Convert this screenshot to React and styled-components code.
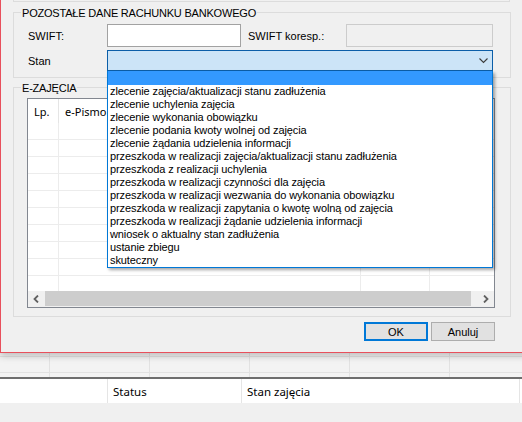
import React from "react";
import styled, { createGlobalStyle } from "styled-components";

const stany = [
  "zlecenie zajęcia/aktualizacji stanu zadłużenia",
  "zlecenie uchylenia zajęcia",
  "zlecenie wykonania obowiązku",
  "zlecenie podania kwoty wolnej od zajęcia",
  "zlecenie żądania udzielenia informacji",
  "przeszkoda w realizacji zajęcia/aktualizacji stanu zadłużenia",
  "przeszkoda z realizacji uchylenia",
  "przeszkoda w realizacji czynności dla zajęcia",
  "przeszkoda w realizacji wezwania do wykonania obowiązku",
  "przeszkoda w realizacji zapytania o kwotę wolną od zajęcia",
  "przeszkoda w realizacji żądanie udzielenia informacji",
  "wniosek o aktualny stan zadłużenia",
  "ustanie zbiegu",
  "skuteczny",
];

const columns = [31, 302, 69, 80];
const backColumns = [50, 100, 100, 100, 100, 100];

const App = () => {
  return (
    <Page>
      <GlobalStyle />
      <Dialog>
        <Content>
          <TopRemnant />
          <GroupBox $top={10} $height={66} $pad={14}>
            <Legend>POZOSTAŁE DANE RACHUNKU BANKOWEGO</Legend>
            <FieldRow $top={11} $height={23}>
              <Label $w={79}>SWIFT:</Label>
              <TextInput $w={134} />
              <Label $w={98} style={{ marginLeft: 7 }}>
                SWIFT koresp.:
              </Label>
              <TextInput $w={147} $disabled />
            </FieldRow>
            <FieldRow $top={3} $height={21}>
              <Label $w={79}>Stan</Label>
              <Combo>
                <svg width="9" height="6" viewBox="0 0 9 6">
                  <polyline
                    points="0.5,0.5 4.5,4.5 8.5,0.5"
                    fill="none"
                    stroke="#3c3c3c"
                    strokeWidth="1.1"
                  />
                </svg>
                <DropList>
                  <ListItem $selected />
                  {stany.map((s) => (
                    <ListItem key={s}>{s}</ListItem>
                  ))}
                </DropList>
              </Combo>
            </FieldRow>
          </GroupBox>

          <GroupBox $top={9} $height={230} $pad={13}>
            <Legend>E-ZAJĘCIA</Legend>
            <Grid>
              <GridHeader>
                {columns.map((w, i) => (
                  <HeaderCell key={i} $w={w}>
                    {i === 0 ? "Lp." : i === 1 ? "e-Pismo" : ""}
                  </HeaderCell>
                ))}
              </GridHeader>
              <GridBody>
                {Array.from({ length: 10 }).map((_, r) => (
                  <GridRow key={r}>
                    {columns.map((w, i) => (
                      <GridCell key={i} $w={w} />
                    ))}
                  </GridRow>
                ))}
              </GridBody>
              <ScrollBar>
                <ScrollArrow>
                  <svg width="7" height="8" viewBox="0 0 7 8">
                    <polyline
                      points="5,0.5 1.5,4 5,7.5"
                      fill="none"
                      stroke="#606060"
                      strokeWidth="1.8"
                    />
                  </svg>
                </ScrollArrow>
                <ScrollTrack>
                  <Thumb />
                </ScrollTrack>
                <ScrollArrow>
                  <svg width="7" height="8" viewBox="0 0 7 8">
                    <polyline
                      points="2,0.5 5.5,4 2,7.5"
                      fill="none"
                      stroke="#606060"
                      strokeWidth="1.8"
                    />
                  </svg>
                </ScrollArrow>
              </ScrollBar>
            </Grid>
          </GroupBox>

          <ButtonRow>
            <Button $default>OK</Button>
            <Button>Anuluj</Button>
          </ButtonRow>
        </Content>
      </Dialog>

      <BackStrip>
        {[3, 15, 4].map((h, r) => (
          <StripRow key={r} $height={h} $last={r === 2}>
            {backColumns.map((w, i) => (
              <StripCell key={i} $w={w} />
            ))}
          </StripRow>
        ))}
      </BackStrip>
      <BackGrid>
        <BackHeader>
          <BackHeaderCell $w={108} />
          <BackHeaderCell $w={134}>Status</BackHeaderCell>
          <BackHeaderCell $w={278}>Stan zajęcia</BackHeaderCell>
        </BackHeader>
      </BackGrid>
    </Page>
  );
};

export default App;

const GlobalStyle = createGlobalStyle`
  html, body {
    margin: 0;
    padding: 0;
    background: #f0f0f0;
  }
  body {
    font-family: "Liberation Sans", Arial, sans-serif;
    font-size: 11px;
    color: #000;
  }
  * {
    box-sizing: border-box;
  }
`;

const Page = styled.div`
  width: 522px;
  height: 422px;
  overflow: hidden;
  background: #f0f0f0;
`;

const Dialog = styled.div`
  position: relative;
  z-index: 1;
  width: 580px;
  height: 353px;
  padding-left: 12px;
  background: #f0f0f0;
  border-left: 1px solid #e8505c;
  border-bottom: 1px solid #e8505c;
  box-shadow: 0 3px 7px rgba(0, 0, 0, 0.22);
`;

const Content = styled.div`
  width: 498px;
  display: flex;
  flex-direction: column;
`;

const TopRemnant = styled.div`
  width: 497px;
  height: 2px;
  border: 1px solid #dcdcdc;
  border-top: none;
`;

const GroupBox = styled.div`
  position: relative;
  margin-top: ${(p) => p.$top}px;
  height: ${(p) => p.$height}px;
  border: 1px solid #dcdcdc;
  padding-left: ${(p) => p.$pad}px;
`;

const Legend = styled.span`
  position: absolute;
  top: -6px;
  left: 7px;
  padding: 0 1px;
  background: #f0f0f0;
  line-height: 13px;
  letter-spacing: -0.2px;
`;

const FieldRow = styled.div`
  display: flex;
  align-items: center;
  margin-top: ${(p) => p.$top}px;
  height: ${(p) => p.$height}px;
`;

const Label = styled.span`
  flex: none;
  width: ${(p) => p.$w}px;
`;

const TextInput = styled.div`
  flex: none;
  width: ${(p) => p.$w}px;
  height: 23px;
  background: ${(p) => (p.$disabled ? "#f0f0f0" : "#fff")};
  border: 1px solid ${(p) => (p.$disabled ? "#cccccc" : "#a2a2a2")};
`;

const Combo = styled.div`
  position: relative;
  flex: none;
  width: 386px;
  height: 21px;
  display: flex;
  align-items: center;
  justify-content: flex-end;
  padding-right: 4px;
  background: #cce4f7;
  border: 1px solid #0b5ea8;
`;

const DropList = styled.div`
  position: absolute;
  z-index: 10;
  top: calc(100% + 1px);
  left: -1px;
  width: 386px;
  background: #fff;
  border: 1px solid #0078d7;
  border-top: none;
  box-shadow: 2px 2px 3px rgba(0, 0, 0, 0.35);
`;

const ListItem = styled.div`
  height: ${(p) => (p.$selected ? 14 : 13)}px;
  line-height: 13px;
  padding-left: 2px;
  white-space: nowrap;
  letter-spacing: -0.1px;
  background: ${(p) => (p.$selected ? "#3399ff" : "#fff")};
`;

const Grid = styled.div`
  margin-top: 10px;
  width: 468px;
  height: 210px;
  display: flex;
  flex-direction: column;
  background: #fff;
  border: 1px solid #828790;
  overflow: hidden;
`;

const GridHeader = styled.div`
  display: flex;
  flex: none;
  height: 24px;
  font-family: "Noto Sans", "Open Sans", sans-serif;
  font-size: 11px;
`;

const HeaderCell = styled.div`
  flex: none;
  width: ${(p) => p.$w}px;
  display: flex;
  align-items: center;
  padding-left: 6px;
  border-right: 1px solid #e5e5e5;
`;

const GridBody = styled.div`
  flex: 1;
  overflow: hidden;
`;

const GridRow = styled.div`
  display: flex;
  height: 17px;
  border-bottom: 1px solid #ececec;
`;

const GridCell = styled.div`
  flex: none;
  width: ${(p) => p.$w}px;
  border-right: 1px solid #ececec;
`;

const ScrollBar = styled.div`
  flex: none;
  display: flex;
  height: 16px;
  background: #f0f0f0;
`;

const ScrollArrow = styled.div`
  flex: none;
  width: 17px;
  display: flex;
  align-items: center;
  justify-content: center;
`;

const ScrollTrack = styled.div`
  flex: 1;
  display: flex;
  padding-right: 6px;
`;

const Thumb = styled.div`
  flex: 1;
  height: 15px;
  background: #cdcdcd;
`;

const ButtonRow = styled.div`
  display: flex;
  justify-content: flex-end;
  gap: 3px;
  margin-top: 5px;
  padding-right: 16px;
`;

const Button = styled.div`
  width: 64px;
  height: 19px;
  display: flex;
  align-items: center;
  justify-content: center;
  background: #e1e1e1;
  border: ${(p) => (p.$default ? "2px solid #0078d7" : "1px solid #adadad")};
`;

const BackStrip = styled.div`
  height: 24px;
  display: flex;
  flex-direction: column;
  background: #f3f3f3;
`;

const StripRow = styled.div`
  display: flex;
  height: ${(p) => p.$height + (p.$last ? 0 : 1)}px;
  border-bottom: ${(p) => (p.$last ? "none" : "1px solid #e2e2e2")};
`;

const StripCell = styled.div`
  flex: none;
  width: ${(p) => p.$w}px;
  border-right: 1px solid #e2e2e2;
`;

const BackGrid = styled.div`
  border-top: 2px solid #6e6e6e;
`;

const BackHeader = styled.div`
  display: flex;
  height: 24px;
  background: #fff;
  font-family: "Noto Sans", "Open Sans", sans-serif;
  font-size: 11.5px;
`;

const BackHeaderCell = styled.div`
  flex: none;
  width: ${(p) => p.$w}px;
  display: flex;
  align-items: center;
  padding-left: 5px;
  border-right: 1px solid #e5e5e5;
`;
